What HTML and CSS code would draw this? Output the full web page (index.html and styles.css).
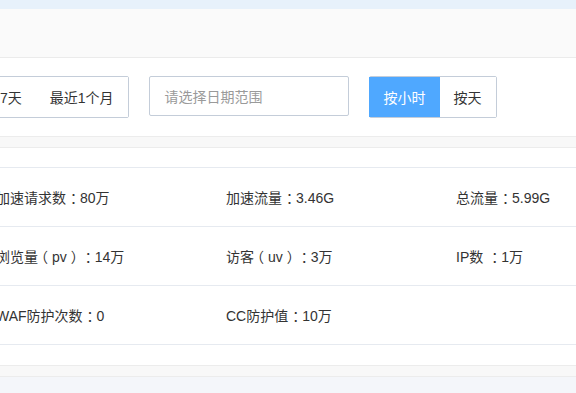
FILE: index.html
```html
<!DOCTYPE html>
<html lang="zh-CN">
<head>
<meta charset="utf-8">
<link rel="stylesheet" href="styles.css">
</head>
<body>
<div class="topbar"></div>
<div class="header"></div>
<div class="toolbar">
  <div class="btn-group range">
    <button class="btn">最近7天</button>
    <button class="btn">最近1个月</button>
  </div>
  <div class="date-input">请选择日期范围</div>
  <div class="btn-group unit">
    <button class="btn active">按小时</button>
    <button class="btn">按天</button>
  </div>
</div>
<div class="divider"></div>
<div class="card">
  <div class="stats">
    <div class="row">
      <div class="cell">加速请求数<span class="c">：</span>80万</div>
      <div class="cell">加速流量<span class="c">：</span>3.46G</div>
      <div class="cell">总流量<span class="c">：</span>5.99G</div>
    </div>
    <div class="row">
      <div class="cell">浏览量<span class="o">（</span>pv<span class="x">）</span><span class="c">：</span>14万</div>
      <div class="cell">访客<span class="o">（</span>uv<span class="x">）</span><span class="c">：</span>3万</div>
      <div class="cell">IP数 <span class="c">：</span>1万</div>
    </div>
    <div class="row">
      <div class="cell">WAF防护次数<span class="c">：</span>0</div>
      <div class="cell">CC防护值<span class="c">：</span>10万</div>
      <div class="cell"></div>
    </div>
  </div>
</div>
<div class="divider"></div>
<div class="footer"></div>
</body>
</html>
```

FILE: styles.css
```css
html, body {
  margin: 0;
  padding: 0;
}
body {
  width: 576px;
  height: 393px;
  overflow: hidden;
  background: #f4f6fa;
  font-family: "Liberation Sans", "Noto Sans CJK SC", sans-serif;
  font-size: 14px;
  color: #333;
  text-spacing-trim: space-all;
}
.topbar {
  height: 9px;
  background: #e7f1fb;
}
.header {
  height: 48px;
  background: #fafafa;
  border-bottom: 1px solid #ebebeb;
}
.toolbar {
  height: 78px;
  box-sizing: border-box;
  padding-top: 18px;
  background: #fff;
  display: flex;
  align-items: flex-start;
  margin-left: -43px;
}
.btn-group {
  display: flex;
  border: 1px solid #c4cdd9;
  border-radius: 2px;
  height: 40px;
}
.btn {
  border: 0;
  background: #fff;
  font: inherit;
  color: #333;
  padding: 0 14px;
  height: 40px;
  cursor: pointer;
}
.btn.active {
  background: #4fa8ff;
  color: #fff;
}
.unit .btn.active {
  margin-left: -1px;
  padding: 0 14px 0 15px;
}
.date-input {
  margin-left: 20px;
  border: 1px solid #c4cdd9;
  border-radius: 2px;
  display: flex;
  align-items: center;
  padding-left: 15px;
  box-sizing: border-box;
  width: 200px;
  height: 40px;
  color: #9a9a9a;
}
.unit {
  margin-left: 20px;
}
.divider {
  height: 10px;
  background: #f8f8f8;
  border-top: 1px solid #ececec;
  border-bottom: 1px solid #ececec;
}
.card {
  background: #fff;
  padding: 19px 0 20px;
}
.stats {
  border-top: 1px solid #e6eaf0;
  margin-left: -4px;
}
.row {
  display: grid;
  grid-template-columns: repeat(3, 230px);
  height: 58px;
  align-items: center;
  border-bottom: 1px solid #e6eaf0;
  white-space: nowrap;
}
.c, .o, .x {
  display: inline-block;
  width: 14px;
  white-space: nowrap;
}
.c {
  text-indent: 4px;
}
.o {
  text-indent: -4px;
}
.x {
  text-indent: 4px;
}
.footer {
  height: 20px;
  background: #f4f6fa;
}
```
